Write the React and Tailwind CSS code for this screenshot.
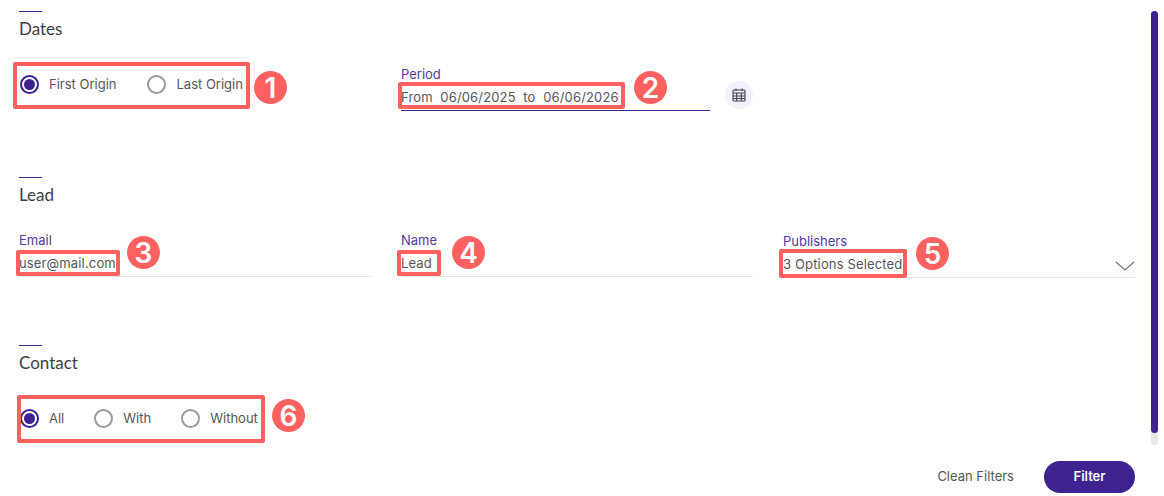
const radioGroups = {
  dates: [
    { label: 'First Origin', checked: true },
    { label: 'Last Origin' },
  ],
  contact: [
    { label: 'All', checked: true },
    { label: 'With' },
    { label: 'Without' },
  ],
};

const Radio = ({ label, checked }) => (
  <label className="flex items-center gap-[10px] text-[13px] leading-5 text-[#55555c]">
    {checked ? (
      <span className="flex h-[19px] w-[19px] items-center justify-center rounded-full border-2 border-[#3d2390]">
        <span className="h-[11px] w-[11px] rounded-full bg-[#3d2390]" />
      </span>
    ) : (
      <span className="h-[19px] w-[19px] rounded-full border-2 border-[#9b9b9b]" />
    )}
    {label}
  </label>
);

const Section = ({ title, className, children }) => (
  <section className={className}>
    <div className="h-px w-[23px] bg-[#3d2390]" />
    <h2 className="mt-[8px] font-['Lato',sans-serif] text-[17px] leading-[18px] text-[#3f3f46]">{title}</h2>
    {children}
  </section>
);

const Field = ({ label, value, active, className, children }) => (
  <div className={className}>
    <div className="text-[13px] leading-[15px] text-[#53399f]">{label}</div>
    <div className={`flex h-[29px] items-center justify-between border-b pt-[3px] text-[13px] tracking-[0.15px] text-[#55555c] ${active ? 'border-[#3d2390]' : 'border-[#e4e4e7]'}`}>
      <span className="whitespace-pre">{value}</span>
      {children}
    </div>
  </div>
);

const CalendarIcon = () => (
  <svg width="14" height="14" viewBox="0 0 14 14" fill="none" stroke="#3f3f46" strokeWidth="1.1">
    <rect x="1" y="2" width="12" height="11" rx="1" />
    <path d="M1 5h12M1 8h12M1 10.5h12M4.7 5v8M9.3 5v8M4 .5v2.5M10 .5v2.5" />
  </svg>
);

const boxes = [
  'left-[13px] top-[62px] h-[47px] w-[237px]',
  'left-[398px] top-[82px] h-[27px] w-[227px]',
  'left-[16px] top-[250px] h-[26px] w-[104px]',
  'left-[397px] top-[250px] h-[26px] w-[44px]',
  'left-[779px] top-[249px] h-[29px] w-[128px]',
  'left-[17px] top-[395px] h-[48px] w-[248px]',
];

const badges = [
  { n: 1, pos: 'left-[254px] top-[71px]' },
  { n: 2, pos: 'left-[634px] top-[71px]' },
  { n: 3, pos: 'left-[127px] top-[236px]' },
  { n: 4, pos: 'left-[452px] top-[236px]' },
  { n: 5, pos: 'left-[916px] top-[237px]' },
  { n: 6, pos: 'left-[272px] top-[399px]' },
];

export default function App() {
  return (
    <div className="relative h-[496px] w-[1164px] overflow-hidden bg-white font-['Inter',sans-serif]">
      <div className="pl-[19px] pr-[29px] pt-[11px]">
        <Section title="Dates" className="h-[166px]">
          <div className="mt-[29px] flex items-start">
            <div className="flex w-[382px] gap-[31px] pl-px pt-[7px]">
              {radioGroups.dates.map((r) => (
                <Radio key={r.label} {...r} />
              ))}
            </div>
            <div className="flex items-end gap-[15px]">
              <Field label="Period" value="From  06/06/2025  to  06/06/2026" active className="w-[309px]" />
              <div className="mb-[2px] flex h-[28px] w-[28px] items-center justify-center rounded-full bg-[#f3f1fb]">
                <CalendarIcon />
              </div>
            </div>
          </div>
        </Section>

        <Section title="Lead" className="h-[168px]">
          <div className="mt-[29px] grid grid-cols-3 gap-[30px]">
            <Field label="Email" value="user@mail.com" />
            <Field label="Name" value="Lead" />
            <Field label="Publishers" value="3 Options Selected" className="mt-px">
              <svg width="20" height="10" viewBox="0 0 20 10" fill="none" stroke="#71717a" strokeWidth="1.2" className="mt-[2px]">
                <path d="M1 1l9 8 9-8" />
              </svg>
            </Field>
          </div>
        </Section>

        <Section title="Contact">
          <div className="mt-[36px] flex gap-[30px] pl-px">
            {radioGroups.contact.map((r) => (
              <Radio key={r.label} {...r} />
            ))}
          </div>
        </Section>
      </div>

      <div className="absolute bottom-[3px] right-[29px] flex items-center gap-[30px]">
        <button className="text-[13px] text-[#55555c]">Clean Filters</button>
        <button className="h-[32px] w-[91px] rounded-full bg-[#3d2390] text-[13px] font-semibold text-white">Filter</button>
      </div>

      <div className="absolute right-[6px] top-[11px] h-[434px] w-[7px] rounded-full bg-[#e8e8e8]">
        <div className="h-[422px] rounded-full bg-[#3d2390]" />
      </div>

      {boxes.map((pos) => (
        <div key={pos} className={`absolute rounded-[2px] border-[4px] border-[#ff6161] ${pos}`} />
      ))}
      {badges.map(({ n, pos }) => (
        <div key={n} className={`absolute flex h-[33px] w-[33px] items-center justify-center rounded-full bg-[#ff6161] text-[28px] font-semibold leading-none text-white ${pos}`}>
          {n}
        </div>
      ))}
    </div>
  );
}
